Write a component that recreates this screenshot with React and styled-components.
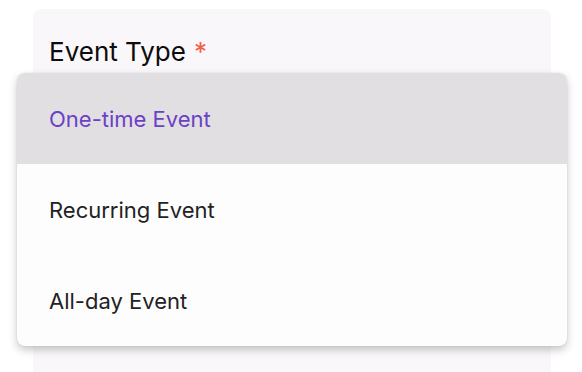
import React from "react";
import styled, { createGlobalStyle } from "styled-components";

const GlobalStyle = createGlobalStyle`
  html, body {
    margin: 0;
    padding: 0;
    background: #ffffff;
    font-family: Inter, "Noto Sans", sans-serif;
  }
`;

const Page = styled.div`
  width: 582px;
  height: 372px;
  overflow: hidden;
  padding: 9px 31px 0 33px;
  box-sizing: border-box;
`;

const Card = styled.div`
  position: relative;
  background: #f9f7fa;
  border-radius: 8px;
  height: 400px;
  padding: 25px 16px;
  box-sizing: border-box;
`;

const Label = styled.label`
  display: block;
  font-size: 26px;
  line-height: 36px;
  color: #0c0c0c;
  font-weight: 400;
`;

const Required = styled.span`
  color: #f26048;
  margin-left: 8px;
`;

const Menu = styled.ul`
  position: absolute;
  left: -16px;
  right: -16px;
  top: 64px;
  margin: 0;
  padding: 0;
  list-style: none;
  background: #fefdfe;
  border-radius: 8px;
  overflow: hidden;
  box-shadow: 0 4px 8px rgba(0, 0, 0, 0.22), 0 0 2px rgba(0, 0, 0, 0.08);
`;

const Option = styled.li`
  height: 91px;
  display: flex;
  align-items: center;
  padding: 0 32px;
  font-size: 22px;
  color: ${(p) => (p.$active ? "#6b41c6" : "#222222")};
  background: ${(p) => (p.$active ? "#e1dfe2" : "transparent")};
`;

const options = ["One-time Event", "Recurring Event", "All-day Event"];

export default function App() {
  return (
    <>
      <GlobalStyle />
      <Page>
        <Card>
          <Label>
            Event Type<Required>*</Required>
          </Label>
          <Menu>
            {options.map((o, i) => (
              <Option key={o} $active={i === 0}>
                {o}
              </Option>
            ))}
          </Menu>
        </Card>
      </Page>
    </>
  );
}
